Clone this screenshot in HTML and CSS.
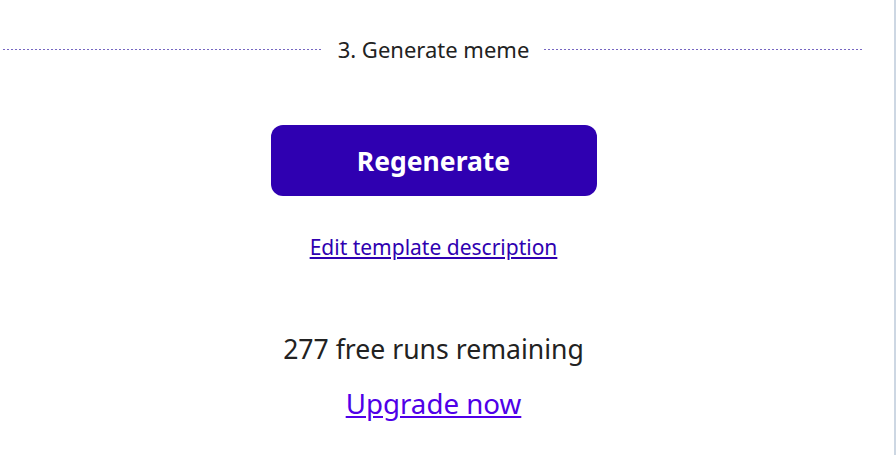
FILE: index.html
```html
<!DOCTYPE html>
<html lang="en">
<head>
<meta charset="utf-8">
<title>Generate meme</title>
<link rel="stylesheet" href="styles.css">
</head>
<body>
<div class="page">
  <main class="main">
    <div class="divider">
      <span class="line"></span>
      <span class="divider-title">3. Generate meme</span>
      <span class="line"></span>
    </div>
    <button class="btn" type="button">Regenerate</button>
    <a class="edit-link" href="#">Edit template description</a>
    <p class="runs">277 free runs remaining</p>
    <a class="upgrade" href="#">Upgrade now</a>
  </main>
  <div class="edge"></div>
</div>
</body>
</html>
```
FILE: styles.css
```css
html, body {
  margin: 0;
  padding: 0;
  background: #fff;
}
body {
  font-family: "Noto Sans", "Open Sans", sans-serif;
  color: #222;
}
.page {
  display: flex;
  height: 455px;
  overflow: hidden;
}
.main {
  width: 867px;
  display: flex;
  flex-direction: column;
  align-items: center;
  padding-top: 35px;
}
.divider {
  align-self: stretch;
  display: flex;
  align-items: center;
  gap: 15px;
  padding: 0 3px;
}
.line {
  flex: 1;
  height: 1px;
  background: repeating-linear-gradient(to right, #7666c2 0 2px, transparent 2px 4px);
}
.divider-title {
  font-size: 22px;
  line-height: 28px;
  color: #222;
}
.btn {
  margin-top: 62px;
  width: 326px;
  height: 71px;
  border: 0;
  border-radius: 12px;
  background: #2f00b1;
  color: #fff;
  font-family: inherit;
  font-weight: 700;
  font-size: 26.5px;
  cursor: pointer;
}
.edit-link {
  margin-top: 37px;
  font-size: 21px;
  line-height: 28px;
  color: #2f00b1;
  text-decoration: underline;
}
.runs {
  margin: 70px 0 0;
  font-size: 26.6px;
  line-height: 36px;
  color: #222;
}
.upgrade {
  margin-top: 18px;
  font-size: 27.7px;
  line-height: 36px;
  color: #4f00e8;
  text-decoration: underline;
}
.edge {
  margin-left: auto;
  width: 2px;
  background: #cdd7e3;
}
```
